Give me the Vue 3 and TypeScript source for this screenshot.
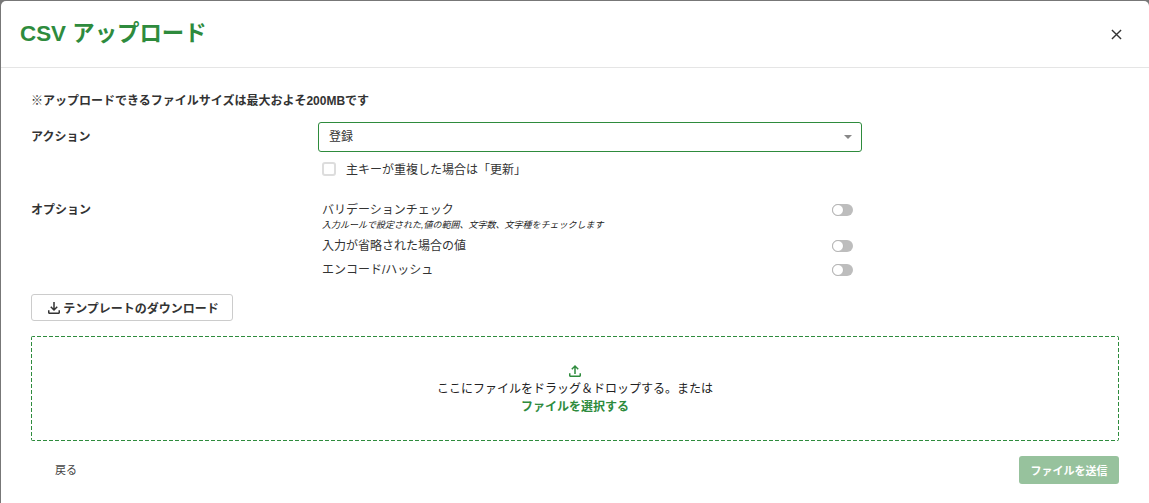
<template>
  <div class="modal">
    <header class="modal-header">
      <h1 class="modal-title">CSV アップロード</h1>
      <button type="button" class="close-button" aria-label="閉じる">
        <svg width="11" height="11" viewBox="0 0 12 12" fill="none" stroke="#333" stroke-width="1.5">
          <path d="M1 1l10 10M11 1L1 11" />
        </svg>
      </button>
    </header>

    <div class="modal-body">
      <p class="note">※アップロードできるファイルサイズは最大およそ200MBです</p>

      <div class="form-row action-row">
        <div class="row-label">アクション</div>
        <div class="row-field">
          <div class="select">
            <span class="select-value">{{ action }}</span>
            <span class="select-arrow"></span>
          </div>
          <label class="check">
            <span class="check-box"></span>
            <span class="check-text">主キーが重複した場合は「更新」</span>
          </label>
        </div>
      </div>

      <div class="form-row option-row">
        <div class="row-label">オプション</div>
        <div class="row-field options">
          <div v-for="option in options" :key="option.title" class="option">
            <div class="option-text">
              <div class="option-title">{{ option.title }}</div>
              <div v-if="option.hint" class="option-hint">{{ option.hint }}</div>
            </div>
            <span class="switch"><span class="switch-knob"></span></span>
          </div>
        </div>
      </div>

      <button type="button" class="template-button">
        <svg width="18" height="18" viewBox="0 0 24 24" fill="#333">
          <path d="M18 15v3H6v-3H4v3c0 1.100.9 2 2 2h12c1.100 0 2-.9 2-2v-3h-2zm-1-4l-1.410-1.410L13 12.170V4h-2v8.170L8.410 9.590 7 11l5 5 5-5z" />
        </svg>
        <span>テンプレートのダウンロード</span>
      </button>

      <div class="dropzone">
        <svg width="18" height="18" viewBox="0 0 24 24" fill="#2e8b3d">
          <path d="M18 15v3H6v-3H4v3c0 1.100.9 2 2 2h12c1.100 0 2-.9 2-2v-3h-2zM7 9l1.410 1.410L11 7.830V16h2V7.830l2.590 2.580L17 9l-5-5-5 5z" />
        </svg>
        <div class="drop-text">ここにファイルをドラッグ＆ドロップする。または</div>
        <div class="drop-link">ファイルを選択する</div>
      </div>

      <footer class="modal-footer">
        <button type="button" class="back-button">戻る</button>
        <button type="button" class="submit-button" disabled>ファイルを送信</button>
      </footer>
    </div>
  </div>
</template>

<script setup lang="ts">
interface OptionItem {
  title: string
  hint?: string
}

const action = '登録'

const options: OptionItem[] = [
  {
    title: 'バリデーションチェック',
    hint: '入力ルールで設定された,値の範囲、文字数、文字種をチェックします',
  },
  { title: '入力が省略された場合の値' },
  { title: 'エンコード/ハッシュ' },
]
</script>

<style>
html,
body {
  margin: 0;
  height: 100%;
  overflow: hidden;
  background: #777;
}
</style>

<style scoped>
.modal {
  box-sizing: border-box;
  height: 502px;
  margin: 1px 0 0 1px;
  background: #fff;
  border-radius: 5px 5px 0 0;
  color: #333;
  font-family: 'Liberation Sans', 'Noto Sans CJK JP', sans-serif;
  font-size: 12px;
}

.modal-header {
  display: flex;
  align-items: center;
  justify-content: space-between;
  box-sizing: border-box;
  height: 67px;
  padding: 0 27px 0 19px;
  border-bottom: 1px solid #e5e5e5;
}

.modal-title {
  margin: 0 0 6px;
  color: #2e8b3d;
  font-size: 22.4px;
  font-weight: 700;
}

.close-button {
  display: flex;
  padding: 0;
  border: 0;
  background: none;
}

.modal-body {
  padding: 0 30px;
}

.note {
  margin: 0;
  padding-top: 25px;
  line-height: 16px;
  font-weight: 700;
}

.form-row {
  display: flex;
}

.action-row {
  margin-top: 13px;
}

.option-row {
  margin-top: 24px;
}

.row-label {
  flex: 0 0 287px;
  line-height: 30px;
  font-weight: 700;
}

.option-row .row-label {
  padding-top: 1px;
  line-height: 16px;
}

.row-field {
  width: 544px;
}

.select {
  display: flex;
  align-items: center;
  justify-content: space-between;
  box-sizing: border-box;
  height: 30px;
  padding: 0 9px 0 10px;
  border: 1px solid #2e8b3d;
  border-radius: 3px;
}

.select-value {
  padding-bottom: 4px;
}

.select-arrow {
  width: 0;
  height: 0;
  border-top: 4px solid #888;
  border-right: 4px solid transparent;
  border-left: 4px solid transparent;
}

.check {
  display: flex;
  align-items: center;
  gap: 10px;
  margin: 9px 0 0 4px;
  line-height: 14px;
}

.check-box {
  box-sizing: border-box;
  width: 14px;
  height: 14px;
  border: 2px solid #ddd;
  border-radius: 3px;
}

.check-text {
  padding-top: 2px;
}

.options {
  display: flex;
  flex-direction: column;
  gap: 6px;
}

.option {
  display: flex;
  align-items: flex-start;
  justify-content: space-between;
  padding: 0 9px 0 4px;
}

.option-title {
  line-height: 18px;
}

.option-hint {
  color: #222;
  font-size: 9px;
  font-style: italic;
  line-height: 12px;
}

.switch {
  display: flex;
  align-items: center;
  box-sizing: border-box;
  width: 21px;
  height: 12px;
  margin-top: 3px;
  border-radius: 6px;
  background: #bdbdbd;
}

.switch-knob {
  box-sizing: border-box;
  width: 12px;
  height: 12px;
  border: 1px solid #b5b5b5;
  border-radius: 50%;
  background: #fff;
}

.template-button {
  display: flex;
  align-items: center;
  justify-content: center;
  box-sizing: border-box;
  width: 202px;
  height: 27px;
  margin-top: 15px;
  border: 1px solid #ccc;
  border-radius: 3px;
  background: #fff;
  color: #333;
  font: inherit;
  font-weight: 700;
}

/* dashes drawn by hand: a 1px dashed border comes out shorter than the reference */
.dropzone {
  display: flex;
  flex-direction: column;
  align-items: center;
  box-sizing: border-box;
  height: 105px;
  margin-top: 15px;
  padding-top: 26px;
  border-radius: 2px;
  background-image:
    repeating-linear-gradient(90deg, #2e8b3d 0 4px, transparent 4px 6px),
    repeating-linear-gradient(90deg, #2e8b3d 0 4px, transparent 4px 6px),
    repeating-linear-gradient(180deg, #2e8b3d 0 4px, transparent 4px 6px),
    repeating-linear-gradient(180deg, #2e8b3d 0 4px, transparent 4px 6px);
  background-position: 0 0, 0 100%, 0 0, 100% 0;
  background-size: 100% 1px, 100% 1px, 1px 100%, 1px 100%;
  background-repeat: no-repeat;
}

.drop-text {
  color: #222;
  line-height: 18px;
}

.drop-link {
  color: #2e8b3d;
  font-weight: 700;
  line-height: 18px;
}

.modal-footer {
  display: flex;
  align-items: center;
  justify-content: space-between;
  margin-top: 15px;
}

.back-button {
  padding: 0 24px 2px;
  border: 0;
  background: none;
  color: #444;
  font: inherit;
  font-size: 11px;
}

.submit-button {
  width: 100px;
  height: 28px;
  border: 0;
  border-radius: 3px;
  background: #97c29d;
  color: #fff;
  font: inherit;
  font-size: 11px;
  font-weight: 700;
}
</style>
